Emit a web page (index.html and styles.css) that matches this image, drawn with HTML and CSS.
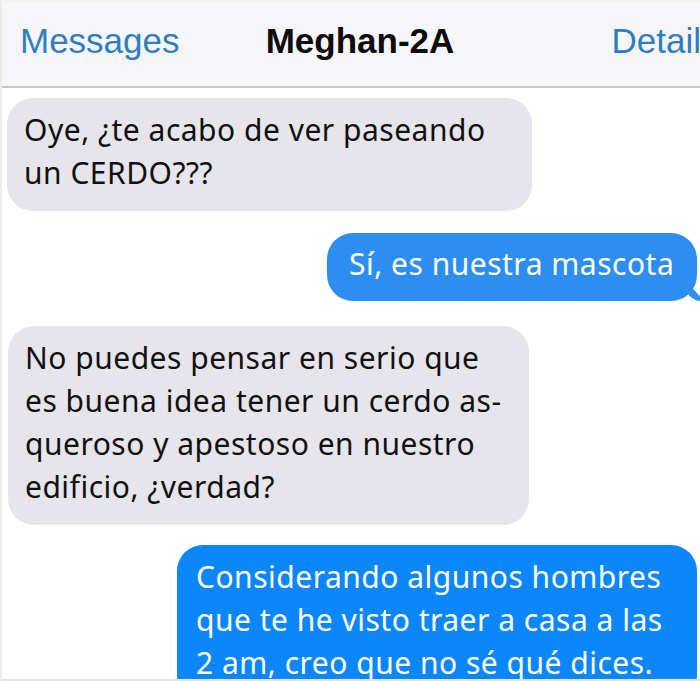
FILE: index.html
```html
<!DOCTYPE html>
<html lang="es">
<head>
<meta charset="utf-8">
<title>Meghan-2A</title>
<link rel="stylesheet" href="styles.css">
</head>
<body>
<div class="screen">
  <header class="nav">
    <span class="nav-back">Messages</span>
    <span class="nav-title">Meghan-2A</span>
    <span class="nav-detail">Detail</span>
  </header>
  <main class="thread">
    <div class="bubble in first">Oye, ¿te acabo de ver paseando<br>un CERDO???</div>
    <div class="bubble out short">Sí, es nuestra mascota</div>
    <div class="bubble in long">No puedes pensar en serio que<br>es buena idea tener un cerdo as-<br>queroso y apestoso en nuestro<br>edificio, ¿verdad?</div>
    <div class="bubble out wide">Considerando algunos hombres<br>que te he visto traer a casa a las<br>2 am, creo que no sé qué dices.</div>
  </main>
</div>
</body>
</html>
```

FILE: styles.css
```css
html, body {
  margin: 0;
  padding: 0;
  background: #ffffff;
}

.screen {
  width: 700px;
  height: 681px;
  overflow: hidden;
  background: #ffffff;
  box-sizing: border-box;
  border-left: 2px solid #ececec;
  border-top: 2px solid #f1f1f1;
  border-bottom: 2px solid #e4e4e4;
}

.nav {
  box-sizing: border-box;
  height: 86px;
  display: grid;
  grid-template-columns: 1fr auto 1fr;
  align-items: start;
  padding: 19px 0 0 18px;
  background: #f6f6f8;
  border-bottom: 2px solid #c6c6c8;
  font-family: "Liberation Sans", Arial, sans-serif;
  font-size: 35px;
  line-height: 40px;
  overflow: hidden;
  white-space: nowrap;
}

.nav-back {
  color: #2f7dc2;
  justify-self: start;
}

.nav-title {
  color: #0c0c0c;
  font-weight: bold;
}

.nav-detail {
  color: #2f7dc2;
  justify-self: end;
  margin-right: -1px;
}

.thread {
  display: flex;
  flex-direction: column;
  padding: 10px 0 0 0;
  font-family: "Noto Sans", "Open Sans", sans-serif;
  font-size: 30px;
  letter-spacing: 0.5px;
  line-height: 43px;
}

.bubble {
  position: relative;
  box-sizing: border-box;
  border-radius: 26px;
  padding: 10px 18px 17px 17px;
  white-space: nowrap;
}

.bubble.in {
  align-self: flex-start;
  background: #e6e5eb;
  color: #111111;
  margin-left: 5px;
}

.bubble.out {
  align-self: flex-end;
  color: #ffffff;
  margin-right: 3px;
}

.bubble.first {
  width: 525px;
}

.bubble.short {
  width: 370px;
  margin-top: 22px;
  padding: 9px 18px 16px 22px;
  background: #2e8ef0;
}

.bubble.long {
  width: 521px;
  margin-top: 25px;
  margin-left: 6px;
}

.bubble.wide {
  width: 520px;
  margin-top: 20px;
  padding-left: 19px;
  background: #0b86fb;
}

.bubble.out::after {
  content: "";
  position: absolute;
  right: -7px;
  bottom: 0;
  width: 18px;
  height: 20px;
  background: inherit;
  border-bottom-left-radius: 16px 14px;
  clip-path: polygon(0 0, 100% 100%, 0 100%);
}
```
